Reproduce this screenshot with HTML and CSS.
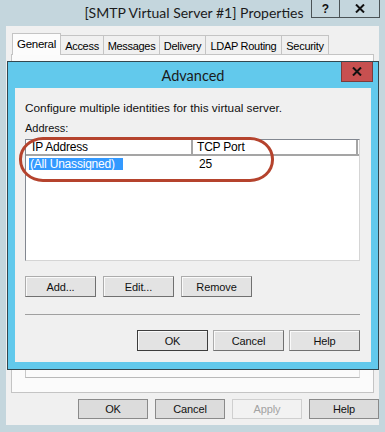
FILE: index.html
```html
<!DOCTYPE html>
<html>
<head>
<meta charset="utf-8">
<link rel="stylesheet" href="styles.css">
</head>
<body>
<div class="win">
  <div class="titlebar">
    <span class="spacer"></span>
    <span class="title">[SMTP Virtual Server #1] Properties</span>
    <div class="caption-btns">
      <span class="cbtn cbtn-help">?</span>
      <span class="cbtn cbtn-close"><svg width="10" height="9" viewBox="0 0 10 9"><path d="M1 0.5 L9 8.5 M9 0.5 L1 8.5" stroke="#111" stroke-width="2"/></svg></span>
    </div>
  </div>
  <div class="client">
    <div class="tabs">
      <span class="tab active t-general">General</span>
      <span class="tab t-access">Access</span>
      <span class="tab t-messages">Messages</span>
      <span class="tab t-delivery">Delivery</span>
      <span class="tab t-ldap">LDAP Routing</span>
      <span class="tab t-security">Security</span>
    </div>
    <div class="panel">
      <div class="group"></div>
    </div>
    <div class="footer">
      <span class="btn btn-dark">OK</span>
      <span class="btn btn-dark">Cancel</span>
      <span class="btn btn-disabled">Apply</span>
      <span class="btn btn-dark">Help</span>
    </div>
  </div>

  <div class="dialog">
    <div class="dlg-title">
      <span class="dlg-spacer"></span>
      <span class="dlg-text">Advanced</span>
      <span class="dlg-close"><svg width="10" height="9" viewBox="0 0 10 9"><path d="M1 0.5 L9 8.5 M9 0.5 L1 8.5" stroke="#111" stroke-width="2"/></svg></span>
    </div>
    <div class="dlg-client">
      <div class="line line-first">Configure multiple identities for this virtual server.</div>
      <div class="line line-addr">Address:</div>
      <div class="listview">
        <div class="lv-head">
          <span class="lv-col lv-col1">IP Address</span>
          <span class="lv-col lv-col2">TCP Port</span>
          <span class="lv-col lv-col3"></span>
        </div>
        <div class="lv-row">
          <span class="lv-cell lv-cell1"><span class="sel">(All Unassigned)</span></span>
          <span class="lv-cell lv-cell2">25</span>
        </div>
      </div>
      <div class="btnrow">
        <span class="btn">Add...</span>
        <span class="btn">Edit...</span>
        <span class="btn">Remove</span>
      </div>
      <div class="sep"></div>
      <div class="btnrow btnrow-right">
        <span class="btn btn-default">OK</span>
        <span class="btn">Cancel</span>
        <span class="btn">Help</span>
      </div>
    </div>
    <div class="annot"></div>
  </div>
</div>
</body>
</html>
```

FILE: styles.css
```css
* { box-sizing: border-box; }
html, body { margin: 0; padding: 0; }
body {
  width: 385px;
  height: 432px;
  overflow: hidden;
  background: #c4d6dd;
  font-family: "Liberation Sans", Arial, sans-serif;
  font-size: 11px;
  color: #000;
}
.win {
  position: relative;
  width: 385px;
  height: 432px;
  background: #c4d6dd;
}
.titlebar {
  height: 26px;
  display: grid;
  grid-template-columns: 1fr auto 1fr;
  align-items: start;
}
.title {
  font-family: "Lato", "Noto Sans", sans-serif;
  font-size: 14px;
  line-height: 18px;
  padding-top: 4px;
  padding-left: 3px;
  color: #1b1b1b;
  white-space: nowrap;
}
.caption-btns {
  justify-self: end;
  display: flex;
  margin-right: 5px;
}
.cbtn {
  height: 18px;
  border: 1px solid #4b5356;
  border-top: none;
  display: flex;
  align-items: center;
  justify-content: center;
  font-weight: bold;
  font-size: 12px;
  color: #111;
}
.cbtn-help { width: 29px; }
.cbtn-close { width: 40px; border-left: none; }

.client {
  margin: 0 6px;
  height: 399px;
  background: #f0f0f0;
  padding-top: 7px;
}
.tabs {
  display: flex;
  align-items: flex-end;
  height: 21px;
  padding-left: 6px;
  position: relative;
  z-index: 1;
}
.tab {
  height: 19px;
  padding-top: 3px;
  border: 1px solid #c4c4c4;
  border-bottom: none;
  border-left: none;
  background: #f0f0f0;
  white-space: nowrap;
  text-align: center;
  font-size: 11px;
  line-height: 14px;
  letter-spacing: -0.3px;
}
.tab.active {
  height: 22px;
  margin-bottom: -1px;
  border-left: 1px solid #c4c4c4;
  background: #fcfcfc;
  font-size: 11.5px;
  position: relative;
  z-index: 2;
}
.t-general { width: 49px; }
.t-access { width: 43px; }
.t-messages { width: 56px; }
.t-delivery { width: 46px; }
.t-ldap { width: 76px; }
.t-security { width: 47px; }
.panel {
  margin-left: 5px;
  width: 363px;
  height: 339px;
  border: 1px solid #c4c4c4;
  background: #fbfbfb;
  padding: 20px 13px 0 13px;
}
.group {
  height: 303px;
  border: 1px solid #c8c8c8;
  border-right-color: #dcdcdc;
  border-bottom-color: #b9b9b9;
}
.footer {
  display: flex;
  gap: 7px;
  justify-content: flex-end;
  margin-top: 6px;
}
.btn {
  display: flex;
  align-items: center;
  justify-content: center;
  width: 71px;
  height: 21px;
  background: #e3e3e3;
  border: 1px solid #acacac;
  border-right-color: #707070;
  border-bottom-color: #707070;
  box-shadow: inset 1px 1px 0 #fafafa;
  font-size: 11px;
  letter-spacing: -0.1px;
  color: #111;
}
.footer .btn { width: 70px; height: 20px; }
.btn-dark {
  background: #dcdcdc;
  border-color: #8a8a8a;
  box-shadow: none;
}
.btn-disabled {
  background: #f2f2f2;
  border-color: #cfcfcf;
  box-shadow: none;
  color: #a3a3a3;
}
.btn-default {
  border-color: #3d3d3d;
  box-shadow: inset 1px 1px 0 #fafafa;
}

.dialog {
  position: absolute;
  left: 7px;
  top: 61px;
  width: 372px;
  height: 309px;
  background: #62c9ec;
  border: 1px solid #33474f;
}
.dlg-title {
  height: 26px;
  display: grid;
  grid-template-columns: 1fr auto 1fr;
  align-items: start;
}
.dlg-text {
  font-family: "Lato", "Noto Sans", sans-serif;
  font-size: 14.5px;
  line-height: 18px;
  padding-top: 5px;
  color: #1b1b1b;
}
.dlg-close {
  justify-self: end;
  margin-right: 5px;
  width: 32px;
  height: 20px;
  background: #c75050;
  border: 1px solid #7d3b3b;
  border-top: none;
  display: flex;
  align-items: center;
  justify-content: center;
}
.dlg-client {
  margin: 0 7px;
  height: 274px;
  background: #f0f0f0;
  padding: 14px 11px 0 10px;
}
.line {
  line-height: 13px;
  height: 13px;
  white-space: nowrap;
  color: #111;
}
.line-first { font-size: 11.8px; }
.line-addr { margin-top: 7px; }
.listview {
  margin-top: 4px;
  height: 122px;
  background: #fff;
  border: 1px solid #828790;
  border-right-color: #d5d5d5;
  border-bottom-color: #d5d5d5;
}
.lv-head {
  display: flex;
  height: 16px;
  border-bottom: 2px solid #a5a5a5;
  background: #fff;
}
.lv-col {
  font-size: 12px;
  line-height: 14px;
  letter-spacing: -0.2px;
  white-space: nowrap;
}
.lv-col1 { width: 167px; padding-left: 6px; border-right: 2px solid #a5a5a5; }
.lv-col2 { width: 165px; padding-left: 4px; border-right: 2px solid #a5a5a5; }
.lv-col3 { flex: 1; }
.lv-row {
  display: flex;
  height: 14px;
  margin-top: 1px;
  align-items: center;
}
.lv-cell { font-size: 12px; line-height: 12px; letter-spacing: -0.2px; white-space: nowrap; }
.lv-cell1 { width: 169px; padding-left: 3px; }
.lv-cell2 { padding-left: 4px; }
.sel {
  display: inline-block;
  background: #3399ff;
  color: #fff;
  padding: 0 8px 0 1px;
  height: 12px;
  line-height: 12px;
}
.btnrow {
  display: flex;
  gap: 7px;
  margin-top: 15px;
}
.btnrow-right {
  justify-content: flex-end;
  gap: 5px;
}
.sep {
  margin-top: 17px;
  height: 1px;
  background: #a0a0a0;
}
.annot {
  position: absolute;
  left: 11px;
  top: 75px;
  width: 255px;
  height: 45px;
  border: 3px solid #b5432d;
  border-radius: 24px / 22px;
}
```
